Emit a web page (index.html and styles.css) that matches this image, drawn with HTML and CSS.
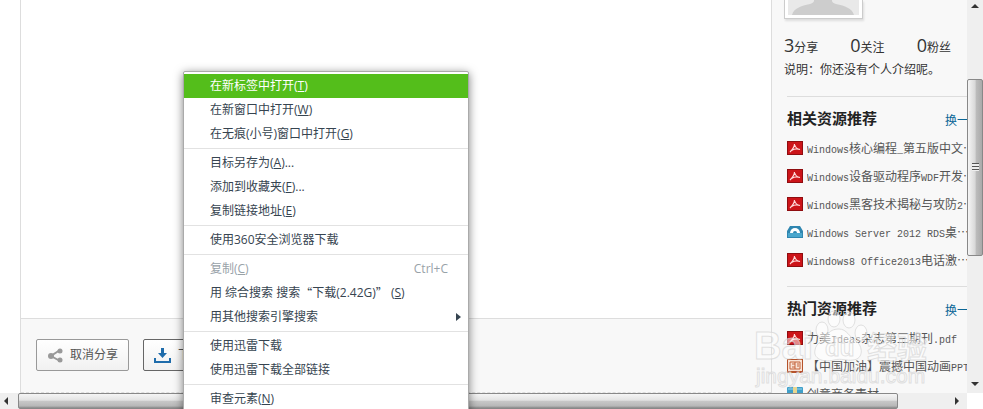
FILE: index.html
```html
<!DOCTYPE html>
<html lang="zh-CN">
<head>
    <meta charset="UTF-8">
    <meta name="viewport" content="width=device-width, initial-scale=1.0">
    <title>资源下载</title>
    <link rel="stylesheet" href="styles.css">
</head>
<body>
    <svg class="symbols" width="0" height="0">
        <symbol id="pdf" viewBox="0 0 16 14">
            <rect width="16" height="14" fill="#8f0d10"/>
            <rect x="1" y="1" width="14" height="12" fill="#cc1419"/>
            <path d="M3 11C5 9 7.500 6 7.500 3M7.500 3C8 6 10 8 13 8.500M4.500 9.500C7 8 10 7.500 13 8.500" fill="none" stroke="#ffd9d9" stroke-width="1.200"/>
        </symbol>
        <symbol id="disc" viewBox="0 0 16 14">
            <path d="M3 1H13L16 6V13H0V6Z" fill="#2f86b0"/>
            <path d="M1 8H15V12H1Z" fill="#4aa6cc"/>
            <path d="M3 8A5 5 0 0 1 13 8Z" fill="#fff"/>
            <path d="M6 8A2 2 0 0 1 10 8Z" fill="#2f86b0"/>
        </symbol>
        <symbol id="ppt" viewBox="0 0 16 14">
            <rect width="16" height="14" fill="#b5532c"/>
            <rect x="1" y="1" width="14" height="11" fill="#f8e3d6"/>
            <path d="M3 3H13V10H3ZM5 5H8M5 8H8M8 3V10M10 5H12M10 7H12" fill="none" stroke="#c4623a"/>
        </symbol>
        <symbol id="zip" viewBox="0 0 16 14">
            <rect width="16" height="14" rx="1" fill="#3f9fc9"/>
            <path d="M1 2H15" stroke="#9bd5ec"/>
            <rect x="6" width="4" height="14" fill="#e8d690"/>
        </symbol>
    </svg>

    <div class="window">
        <div class="page">
            <main class="main">
                <div class="toolbar">
                    <button class="btn" type="button">
                        <svg width="15" height="15" viewBox="0 0 15 15"><path d="M12 2L3 8L12 13" fill="none" stroke="#999" stroke-width="2"/><circle cx="12" cy="3" r="2.500" fill="#999"/><circle cx="3" cy="8" r="3" fill="#999"/><circle cx="12" cy="12" r="2.500" fill="#999"/></svg>
                        取消分享
                    </button>
                    <button class="btn btn-down" type="button">
                        <svg width="17" height="15" viewBox="0 0 17 15"><path d="M7 0H10V5H13L8.500 10L4 5H7Z" fill="#1f6cab"/><path d="M1 10V14H16V10" fill="none" stroke="#1f6cab" stroke-width="2"/></svg>
                        下载(2.42G)
                    </button>
                </div>
            </main>
            <aside class="side">
                <div class="avatar">
                    <svg width="71" height="15" viewBox="0 0 71 15"><rect width="71" height="15" fill="#e9e9e9"/><path d="M4 15C6 8 13 6 22 4C26 3 26 1 26 0H44C44 1 44 3 48 4C57 6 64 8 66 15Z" fill="#cdcdcd"/></svg>
                </div>
                <ul class="counts">
                    <li><b>3</b>分享</li>
                    <li><b>0</b>关注</li>
                    <li><b>0</b>粉丝</li>
                </ul>
                <p class="intro">说明：你还没有个人介绍呢。</p>
                <section class="box">
                    <div class="box-head"><h2>相关资源推荐</h2><a href="#">换一换</a></div>
                    <ul class="list">
                        <li><svg><use href="#pdf"/></svg><a href="#"><span class="en">Windows</span>核心编程<span class="en">_</span>第五版中文…</a></li>
                        <li><svg><use href="#pdf"/></svg><a href="#"><span class="en">Windows</span>设备驱动程序<span class="en">WDF</span>开发…</a></li>
                        <li><svg><use href="#pdf"/></svg><a href="#"><span class="en">Windows</span>黑客技术揭秘与攻防<span class="en">2</span>…</a></li>
                        <li><svg><use href="#disc"/></svg><a href="#"><span class="en">Windows Server 2012 RDS</span>桌…</a></li>
                        <li><svg><use href="#pdf"/></svg><a href="#"><span class="en">Windows8 Office2013</span>电话激…</a></li>
                    </ul>
                </section>
                <section class="box">
                    <div class="box-head"><h2>热门资源推荐</h2><a href="#">换一换</a></div>
                    <ul class="list">
                        <li><svg><use href="#pdf"/></svg><a href="#">力美<span class="en">Ideas</span>杂志第三期刊<span class="en">.pdf</span></a></li>
                        <li><svg><use href="#ppt"/></svg><a href="#">【中国加油】震撼中国动画<span class="en">PPT</span></a></li>
                        <li><svg><use href="#zip"/></svg><a href="#">创意商务素材</a></li>
                    </ul>
                </section>
            </aside>
        </div>
        <div class="vbar">
            <i class="arrow up"></i>
            <div class="vthumb"><i class="grip"></i></div>
            <i class="arrow down"></i>
        </div>
        <div class="hbar">
            <i class="arrow left"></i>
            <div class="hthumb"></div>
            <i class="arrow right"></i>
        </div>
    </div>

    <svg class="watermark" width="180" height="82" viewBox="0 0 180 82">
        <text x="0" y="49" font-size="38">Bai</text>
        <path d="M85 19C93 19 95 27 102 31C109 36 110 49 99 50C92 51 88 48 80 50C68 53 59 48 61 40C62 33 69 31 73 25C76 21 79 19 85 19Z"/>
        <ellipse cx="68" cy="20" rx="6" ry="8"/>
        <ellipse cx="80" cy="9" rx="6" ry="8"/>
        <ellipse cx="95" cy="10" rx="6" ry="8"/>
        <ellipse cx="107" cy="23" rx="6" ry="8"/>
        <text x="71" y="46" font-size="24">du</text>
        <text x="113" y="48" font-size="30">经验</text>
        <text class="url" x="2" y="73" font-size="21">jingyan.baidu.com</text>
    </svg>

    <nav class="menu">
        <button class="on" type="button">在新标签中打开(<u>T</u>)</button>
        <button type="button">在新窗口中打开(<u>W</u>)</button>
        <button type="button">在无痕(小号)窗口中打开(<u>G</u>)</button>
        <hr>
        <button type="button">目标另存为(<u>A</u>)...</button>
        <button type="button">添加到收藏夹(<u>F</u>)...</button>
        <button type="button">复制链接地址(<u>E</u>)</button>
        <hr>
        <button type="button">使用360安全浏览器下载</button>
        <hr>
        <button type="button" disabled>复制(<u>C</u>)<kbd>Ctrl+C</kbd></button>
        <button type="button">用 综合搜索 搜索<span class="quote">“</span>下载(2.42G)<span class="quote">”</span> (<u>S</u>)</button>
        <button type="button">用其他搜索引擎搜索<i class="more"></i></button>
        <hr>
        <button type="button">使用迅雷下载</button>
        <button type="button">使用迅雷下载全部链接</button>
        <hr>
        <button type="button">审查元素(<u>N</u>)</button>
    </nav>
</body>
</html>
```
FILE: styles.css
```css
* {
    margin: 0;
    padding: 0;
    box-sizing: border-box;
}

body {
    position: relative;
    height: 100vh;
    overflow: hidden;
    background: #fff;
    font: 12px/16px "Liberation Sans", "Noto Sans CJK SC", sans-serif;
    color: #333;
}

ul {
    list-style: none;
}

a {
    text-decoration: none;
}

.symbols {
    position: absolute;
}

.window {
    display: grid;
    grid-template-columns: minmax(0, 1fr) 16px;
    grid-template-rows: minmax(0, 1fr) 16px;
    height: 100%;
}

.page {
    display: flex;
    padding-left: 20px;
    overflow: hidden;
}

/* left part */
.main {
    flex: 1;
    display: flex;
    flex-direction: column;
    justify-content: flex-end;
    border-left: 1px solid #ddd;
    border-right: 1px solid #ddd;
}

.toolbar {
    display: flex;
    gap: 14px;
    height: 75px;
    padding: 20px 15px;
    background: #f8f8f8;
    border-top: 1px solid #ddd;
    border-bottom: 1px dashed #ddd;
}

.btn {
    display: flex;
    align-items: center;
    gap: 7px;
    height: 32px;
    padding: 0 10px 0 11px;
    background: linear-gradient(#fff, #f1f1f1);
    border: 1px solid #999;
    border-radius: 2px;
    font: inherit;
    color: #555;
}

.btn-down {
    padding-left: 10px;
    border-color: #666;
}

/* right part */
.side {
    width: 195px;
    padding-left: 12px;
    background: #f8f8f8;
    overflow: hidden;
}

.avatar {
    width: 79px;
    height: 19px;
    padding: 0 3px;
    background: #fff;
    border: 1px solid #ccc;
    border-top: 0;
    box-shadow: 1px 2px 2px #ddd;
}

.avatar svg {
    display: block;
}

.counts {
    display: flex;
    gap: 32px;
    margin-top: 14px;
    line-height: 24px;
}

.counts b {
    font: 18px "Open Sans", sans-serif;
}

.intro {
    margin-top: 2px;
    white-space: nowrap;
}

.box {
    margin: 18px 0 0 3px;
    border-top: 1px solid #ddd;
}

.box + .box {
    margin-top: 12px;
}

.box-head {
    display: flex;
    justify-content: space-between;
    padding: 12px 0 3px;
    line-height: 20px;
}

.box-head h2 {
    font-size: 15px;
    line-height: 20px;
    color: #222;
}

.box-head a {
    width: 22px;
    padding-top: 2px;
    overflow: hidden;
    white-space: nowrap;
    color: #0a6696;
}

.list {
    font-family: "Noto Sans CJK SC", sans-serif;
}

.list li {
    display: flex;
    align-items: center;
    gap: 4px;
    height: 28px;
}

.list svg {
    flex: none;
    width: 16px;
    height: 14px;
}

.list a {
    overflow: hidden;
    white-space: nowrap;
    color: #555;
}

.en {
    font: 10px "Liberation Mono", monospace;
}

/* scroll bars */
.vbar,
.hbar {
    display: flex;
    align-items: center;
    background: #efefef;
}

.vbar {
    flex-direction: column;
}

.vthumb {
    display: flex;
    align-items: center;
    justify-content: center;
    width: 16px;
    height: 45%;
    margin: 71px 0 auto;
    background: linear-gradient(90deg, #f5f5f5, #d8d8d8 50%, #bbb 60%, #aaa);
    border: 1px solid #888;
    border-radius: 2px;
}

.grip {
    width: 7px;
    height: 8px;
    background: repeating-linear-gradient(#555 0 1px, #eee 1px 3px);
}

.hthumb {
    flex: 1;
    height: 16px;
    margin: 0 57px 0 10px;
    background: linear-gradient(#f5f5f5, #e2e2e2 45%, #c8c8c8 50%, #b8b8b8 85%, #888);
    border: 1px solid #888;
    border-radius: 2px;
}

.arrow,
.more {
    border: 4px solid transparent;
}

.up {
    margin-top: 4px;
    border-top: 0;
    border-bottom-color: #333;
}

.down {
    margin-bottom: 7px;
    border-bottom: 0;
    border-top-color: #333;
}

.left {
    margin-left: 4px;
    border-left: 0;
    border-right-color: #333;
}

.right {
    margin-right: 24px;
    border-right: 0;
    border-left-color: #333;
}

.hbar .right {
    margin-right: 8px;
}

/* watermark over the page */
.watermark {
    position: absolute;
    right: 49px;
    bottom: 17px;
    font-family: "Liberation Sans", "Noto Sans CJK SC", sans-serif;
    font-weight: bold;
    fill: #fff;
    fill-opacity: 0.5;
    stroke: #d4d4d4;
    stroke-opacity: 0.7;
    pointer-events: none;
}

.url {
    font-weight: normal;
}

/* context menu */
.menu {
    position: absolute;
    top: 71px;
    left: 183px;
    width: 286px;
    padding: 2px 0;
    background: #fff;
    border: 1px solid #aaa;
    border-radius: 2px;
    box-shadow: 0 2px 10px rgba(0, 0, 0, 0.5);
    font-family: "Open Sans", "Noto Sans CJK SC", sans-serif;
}

.menu button {
    display: flex;
    align-items: center;
    width: 100%;
    height: 24px;
    padding: 0 20px 0 26px;
    background: none;
    border: 0;
    font: inherit;
    color: #364450;
    white-space: pre;
}

.menu .on {
    background: #54be1b;
    color: #fff;
}

.menu button:disabled {
    color: #98a2a8;
}

.menu hr {
    margin: 2px 0;
    border: 0;
    border-top: 1px solid #e2e2e2;
}

.menu kbd {
    margin-left: auto;
    font: inherit;
}

.quote {
    font-family: "Noto Sans CJK SC", sans-serif;
}

.more {
    margin: 0 -17px 0 auto;
    border-left: 5px solid #364450;
}
```
